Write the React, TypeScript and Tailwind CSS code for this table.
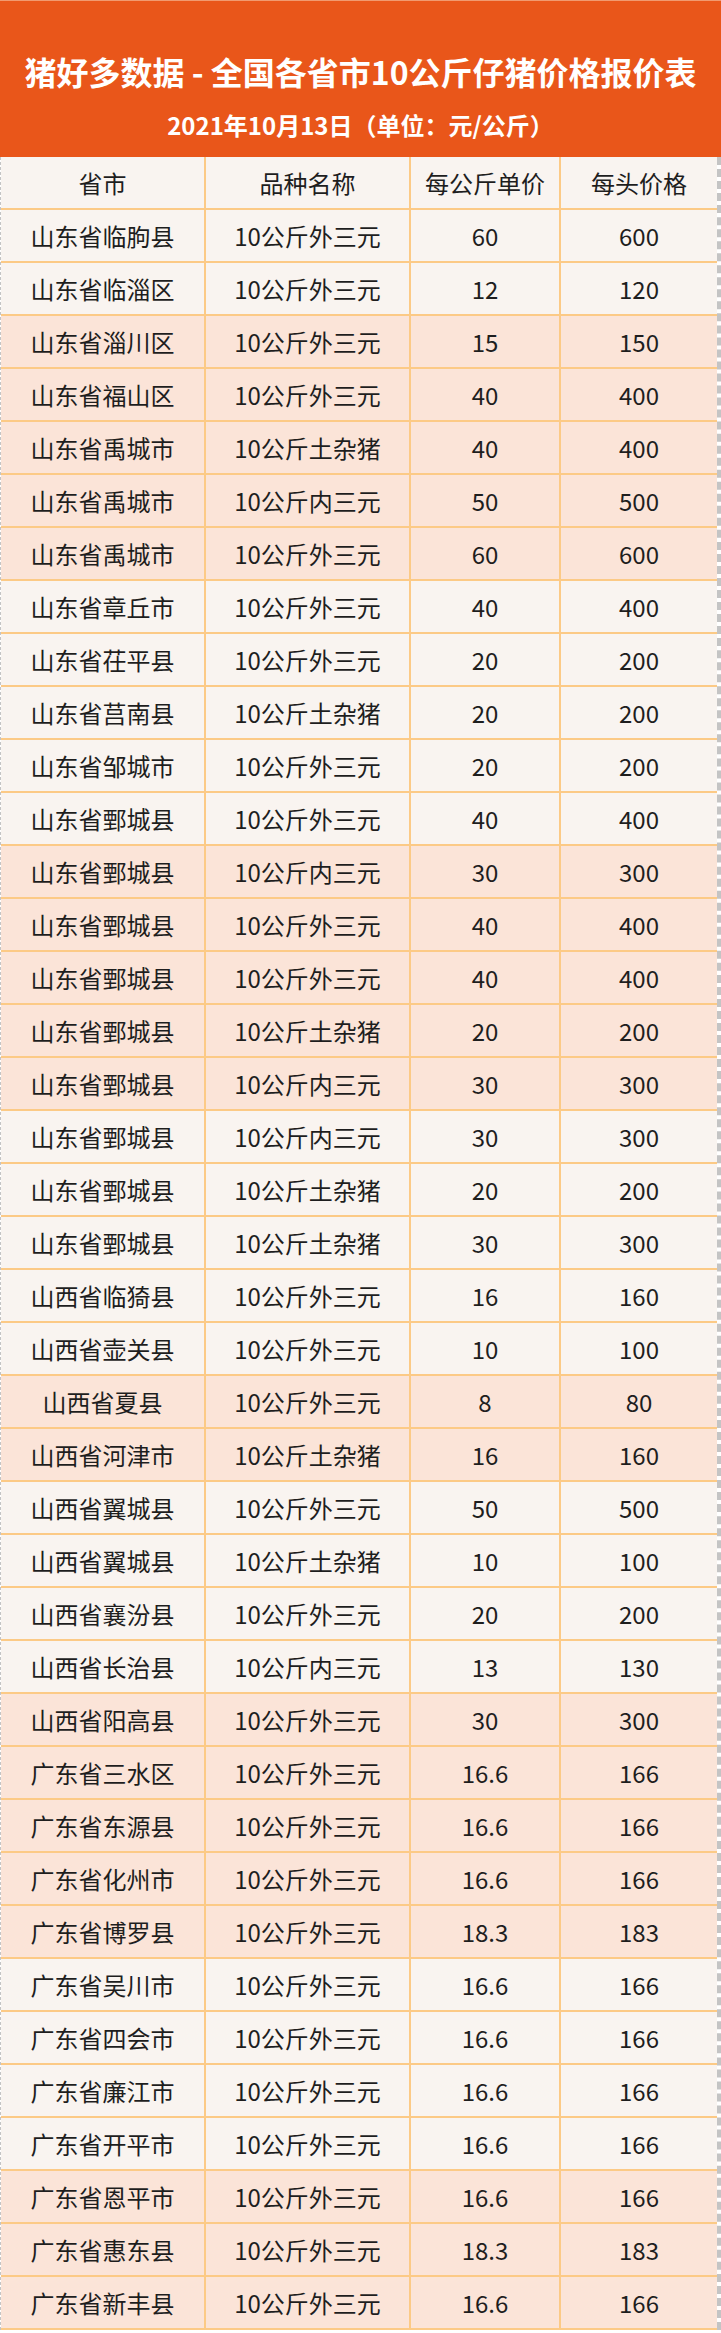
const ROWS: [string, string, string, string][] = [
  ['山东省临朐县', '10公斤外三元', '60', '600'],
  ['山东省临淄区', '10公斤外三元', '12', '120'],
  ['山东省淄川区', '10公斤外三元', '15', '150'],
  ['山东省福山区', '10公斤外三元', '40', '400'],
  ['山东省禹城市', '10公斤土杂猪', '40', '400'],
  ['山东省禹城市', '10公斤内三元', '50', '500'],
  ['山东省禹城市', '10公斤外三元', '60', '600'],
  ['山东省章丘市', '10公斤外三元', '40', '400'],
  ['山东省茌平县', '10公斤外三元', '20', '200'],
  ['山东省莒南县', '10公斤土杂猪', '20', '200'],
  ['山东省邹城市', '10公斤外三元', '20', '200'],
  ['山东省鄄城县', '10公斤外三元', '40', '400'],
  ['山东省鄄城县', '10公斤内三元', '30', '300'],
  ['山东省鄄城县', '10公斤外三元', '40', '400'],
  ['山东省鄄城县', '10公斤外三元', '40', '400'],
  ['山东省鄄城县', '10公斤土杂猪', '20', '200'],
  ['山东省鄄城县', '10公斤内三元', '30', '300'],
  ['山东省鄄城县', '10公斤内三元', '30', '300'],
  ['山东省鄄城县', '10公斤土杂猪', '20', '200'],
  ['山东省鄄城县', '10公斤土杂猪', '30', '300'],
  ['山西省临猗县', '10公斤外三元', '16', '160'],
  ['山西省壶关县', '10公斤外三元', '10', '100'],
  ['山西省夏县', '10公斤外三元', '8', '80'],
  ['山西省河津市', '10公斤土杂猪', '16', '160'],
  ['山西省翼城县', '10公斤外三元', '50', '500'],
  ['山西省翼城县', '10公斤土杂猪', '10', '100'],
  ['山西省襄汾县', '10公斤外三元', '20', '200'],
  ['山西省长治县', '10公斤内三元', '13', '130'],
  ['山西省阳高县', '10公斤外三元', '30', '300'],
  ['广东省三水区', '10公斤外三元', '16.6', '166'],
  ['广东省东源县', '10公斤外三元', '16.6', '166'],
  ['广东省化州市', '10公斤外三元', '16.6', '166'],
  ['广东省博罗县', '10公斤外三元', '18.3', '183'],
  ['广东省吴川市', '10公斤外三元', '16.6', '166'],
  ['广东省四会市', '10公斤外三元', '16.6', '166'],
  ['广东省廉江市', '10公斤外三元', '16.6', '166'],
  ['广东省开平市', '10公斤外三元', '16.6', '166'],
  ['广东省恩平市', '10公斤外三元', '16.6', '166'],
  ['广东省惠东县', '10公斤外三元', '18.3', '183'],
  ['广东省新丰县', '10公斤外三元', '16.6', '166'],
]

// rows shaded pink in the source sheet (0-based)
const PINK = new Set([2, 3, 4, 5, 6, 12, 13, 14, 15, 16, 22, 23, 28, 29, 30, 31, 32, 37, 38, 39])

function Row({ cells, pink }: { cells: string[]; pink?: boolean }) {
  return (
    <div
      className={`grid grid-cols-[205px_205px_150px_1fr] h-[53px] border-b-2 border-[#fcca86] ${
        pink ? 'bg-[#fbe4d8]' : 'bg-[#f9f4f0]'
      }`}
    >
      {cells.map((c, i) => (
        <div
          key={i}
          className={`flex items-center justify-center text-[24px] text-[#1e1e1e] ${
            i < 3 ? 'border-r-2 border-[#fcca86]' : ''
          }`}
        >
          {c}
        </div>
      ))}
    </div>
  )
}

export default function App() {
  return (
    <div className="w-[721px] bg-white font-['Noto_Sans_CJK_SC',sans-serif]">
      <div className="h-[157px] bg-[#e9561a] border-t border-[#f19a70] text-white text-center font-bold">
        <div className="pt-[50px] text-[32px] leading-[40px]">猪好多数据 - 全国各省市10公斤仔猪价格报价表</div>
        <div className="mt-[18px] text-[24px] leading-[32px]">2021年10月13日（单位：元/公斤）</div>
      </div>
      <div className="border-l border-r-4 border-dashed border-[#c4c4c4]">
        <Row cells={['省市', '品种名称', '每公斤单价', '每头价格']} />
        {ROWS.map((r, i) => (
          <Row key={i} cells={r} pink={PINK.has(i)} />
        ))}
      </div>
    </div>
  )
}
